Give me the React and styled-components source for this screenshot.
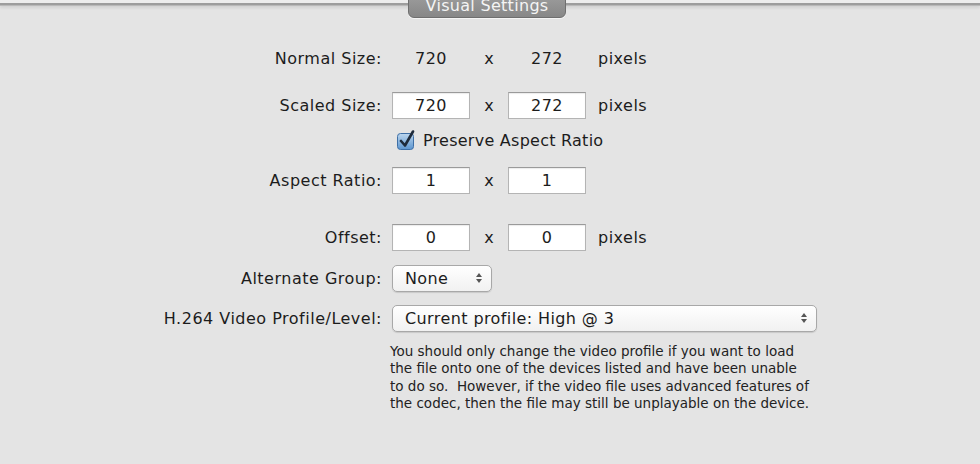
import { styled, createGlobalStyle } from 'styled-components';

const GlobalStyle = createGlobalStyle`
  html, body {
    margin: 0;
    padding: 0;
    background: #e4e4e4;
  }
  body {
    font-family: "DejaVu Sans", "Liberation Sans", sans-serif;
    color: #1c1c1c;
  }
`;

const Panel = styled.div`
  position: relative;
  width: 980px;
  height: 464px;
  overflow: hidden;
  background: #e4e4e4;
`;

const TopEdge = styled.div`
  height: 3px;
  background: #ededed;
  border-bottom: 2px solid #9d9d9d;
  box-shadow: 0 1px 0 #b9b9b9, 0 3px 3px rgba(0, 0, 0, 0.08);
`;

const Tab = styled.div`
  position: absolute;
  left: 408px;
  top: -5px;
  width: 158px;
  height: 23px;
  box-sizing: border-box;
  border: 1px solid #6f6f6f;
  border-radius: 0 0 6px 6px;
  background: linear-gradient(#9c9c9c, #878787);
  box-shadow: 0 1px 0 rgba(255, 255, 255, 0.6);
  color: #f4f4f4;
  font-size: 16px;
  letter-spacing: 0.3px;
  text-align: center;
  line-height: 20px;
`;

const Form = styled.div`
  display: flex;
  flex-direction: column;
`;

const Row = styled.div`
  display: flex;
  align-items: center;
  height: ${(p) => p.$h || 28}px;
  margin-top: ${(p) => p.$gap}px;
`;

const Label = styled.div`
  width: 382px;
  flex: none;
  text-align: right;
  font-size: 16px;
  letter-spacing: 0.5px;
  white-space: nowrap;
`;

const Controls = styled.div`
  display: flex;
  align-items: center;
  margin-left: 10px;
`;

const Field = styled.div`
  width: 78px;
  height: 27px;
  box-sizing: border-box;
  display: flex;
  align-items: center;
  justify-content: center;
  font-size: 16px;
  letter-spacing: 0.5px;
  ${(p) =>
    p.$plain
      ? ''
      : `
    background: #fff;
    border: 1px solid #b4b4b4;
    border-top-color: #9a9a9a;
    box-shadow: inset 0 1px 1px rgba(0,0,0,0.08);
  `}
`;

const Times = styled.div`
  width: 38px;
  text-align: center;
  font-size: 16px;
`;

const Unit = styled.div`
  margin-left: 12px;
  font-size: 16px;
  letter-spacing: 0.5px;
`;

const CheckRow = styled.label`
  display: flex;
  align-items: center;
  gap: 7px;
  margin-left: 4px;
  font-size: 16px;
  letter-spacing: 0.25px;
`;

const Popup = styled.div`
  width: ${(p) => p.$w}px;
  height: 27px;
  box-sizing: border-box;
  display: flex;
  align-items: center;
  justify-content: space-between;
  padding: 0 8px 0 12px;
  border: 1px solid #a8a8a8;
  border-radius: 5px;
  background: linear-gradient(#ffffff, #f1f1f1);
  box-shadow: 0 1px 1px rgba(0, 0, 0, 0.12);
  font-size: 16px;
  letter-spacing: 0.4px;
`;

const Help = styled.div`
  margin: 11px 0 0 390px;
  display: flex;
  flex-direction: column;
  font-size: 13.5px;
  line-height: 17.3px;
  color: #222;
  white-space: nowrap;
`;

function Arrows() {
  return (
    <svg width="8" height="12" viewBox="0 0 8 12">
      <path d="M4 1 L7 5 L1 5 Z" fill="#555" />
      <path d="M4 11 L7 7 L1 7 Z" fill="#555" />
    </svg>
  );
}

function CheckBox() {
  return (
    <svg width="20" height="20" viewBox="0 0 20 20">
      <defs>
        <linearGradient id="cb" x1="0" y1="0" x2="0" y2="1">
          <stop offset="0" stopColor="#bcd6ee" />
          <stop offset="1" stopColor="#5c95cf" />
        </linearGradient>
      </defs>
      <rect x="1.5" y="3.5" width="16" height="16" rx="3" fill="url(#cb)" stroke="#3e6fa6" />
      <path d="M5 11 L9 15.5 L17 1.5" fill="none" stroke="#1d2a3a" strokeWidth="2.6" strokeLinecap="round" strokeLinejoin="round" />
    </svg>
  );
}

function SizeRow({ gap, label, a, b, unit, plain }) {
  return (
    <Row $gap={gap}>
      <Label>{label}</Label>
      <Controls>
        <Field $plain={plain}>{a}</Field>
        <Times>x</Times>
        <Field $plain={plain}>{b}</Field>
        {unit && <Unit>pixels</Unit>}
      </Controls>
    </Row>
  );
}

const helpLines = [
  'You should only change the video profile if you want to load',
  'the file onto one of the devices listed and have been unable',
  'to do so.\u00a0 However, if the video file uses advanced features of',
  'the codec, then the file may still be unplayable on the device.',
];

export default function App() {
  return (
    <>
      <GlobalStyle />
      <Panel>
        <TopEdge />
        <Tab>Visual Settings</Tab>
        <Form>
          <SizeRow gap={39} label="Normal Size:" a="720" b="272" unit plain />
          <SizeRow gap={19} label="Scaled Size:" a="720" b="272" unit />
          <Row $gap={7} $h={28}>
            <Label />
            <Controls>
              <CheckRow>
                <CheckBox />
                Preserve Aspect Ratio
              </CheckRow>
            </Controls>
          </Row>
          <SizeRow gap={12} label="Aspect Ratio:" a="1" b="1" />
          <SizeRow gap={29} label="Offset:" a="0" b="0" unit />
          <Row $gap={13}>
            <Label>Alternate Group:</Label>
            <Controls>
              <Popup $w={100}>
                None
                <Arrows />
              </Popup>
            </Controls>
          </Row>
          <Row $gap={12}>
            <Label>H.264 Video Profile/Level:</Label>
            <Controls>
              <Popup $w={425}>
                Current profile: High @ 3
                <Arrows />
              </Popup>
            </Controls>
          </Row>
          <Help>
            {helpLines.map((line) => (
              <span key={line}>{line}</span>
            ))}
          </Help>
        </Form>
      </Panel>
    </>
  );
}
